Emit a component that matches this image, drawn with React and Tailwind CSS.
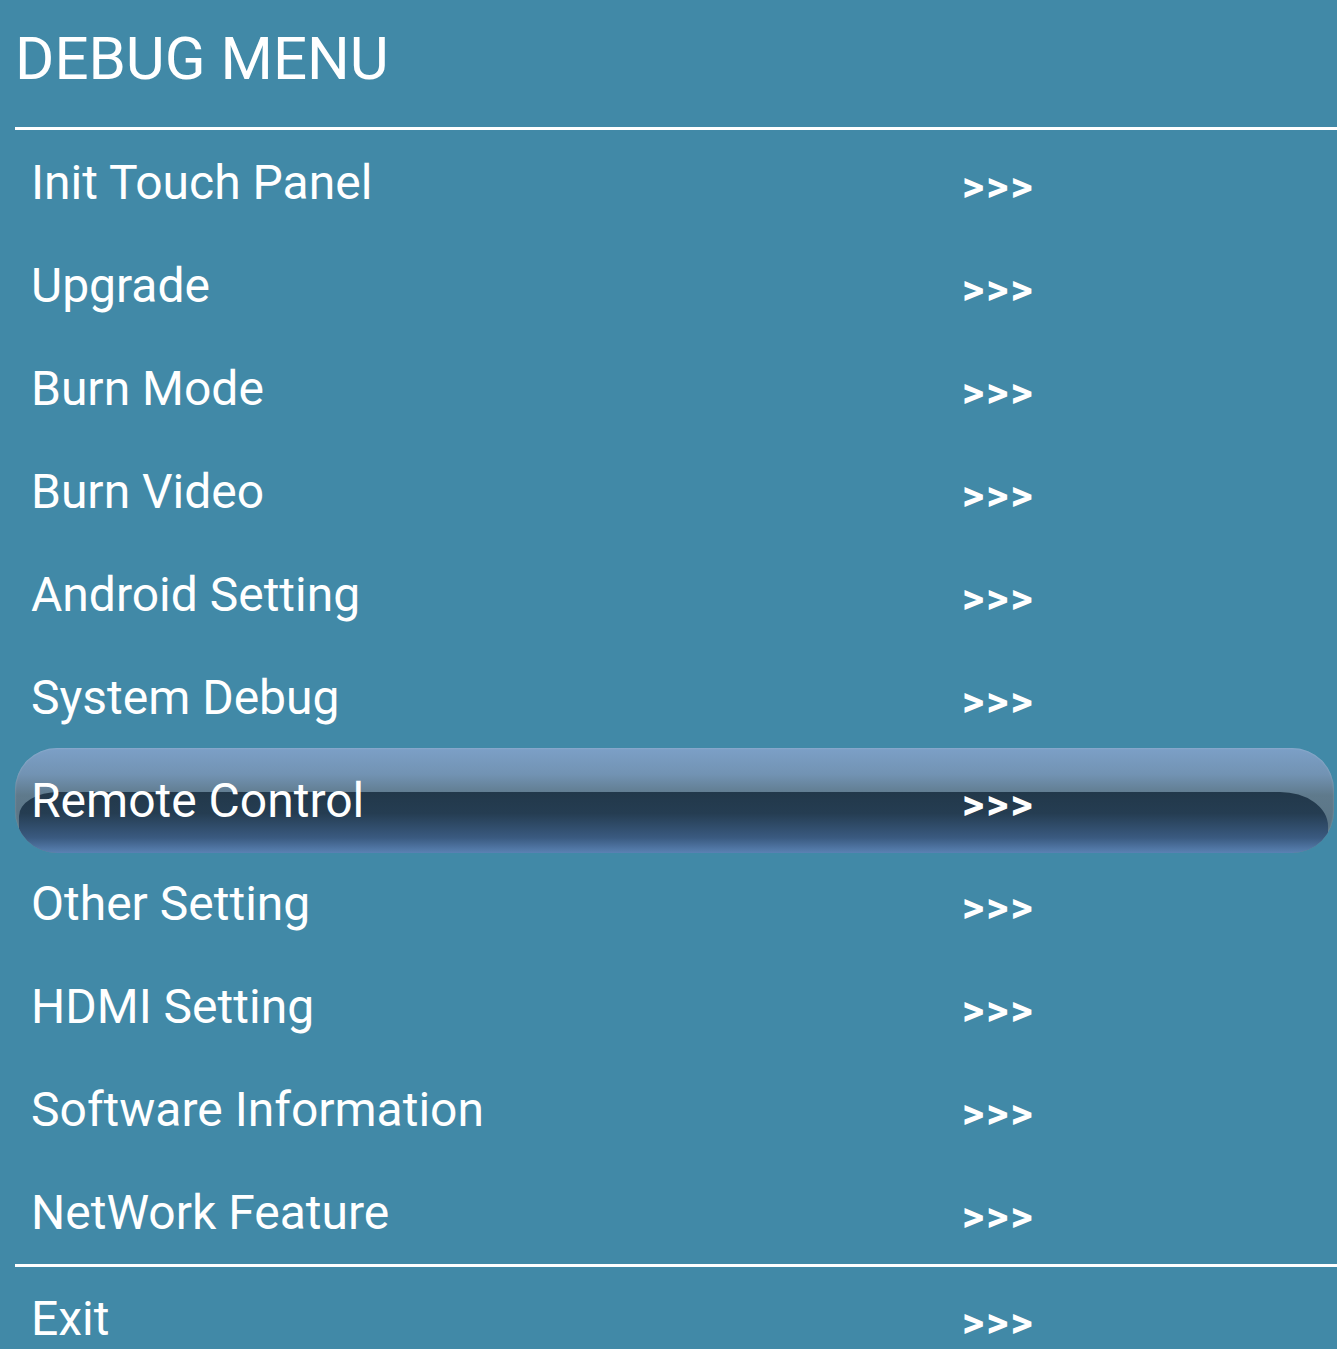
import React from "react";

const items = [
  "Init Touch Panel",
  "Upgrade",
  "Burn Mode",
  "Burn Video",
  "Android Setting",
  "System Debug",
  "Remote Control",
  "Other Setting",
  "HDMI Setting",
  "Software Information",
  "NetWork Feature",
];

const Row = ({ label, active }) => (
  <div className="relative h-[103px] flex items-center">
    {active && (
      <div className="absolute left-[15px] right-[3px] top-[-1px] bottom-[-1px] rounded-[42px] overflow-hidden bg-[linear-gradient(to_bottom,#7ca0c7_0%,#7293b3_25%,#5f7a8c_45%,#56707f_100%)] shadow-[inset_0_0_2px_rgba(255,255,255,0.3)]">
        <div className="absolute left-[4px] right-[6px] top-[42%] bottom-0 rounded-tl-[40px_24px] rounded-tr-[48px_34px] bg-[linear-gradient(to_bottom,#22384a_0%,#253d52_35%,#3a5a80_75%,#5a82b3_100%)]" />
      </div>
    )}
    <span className="relative pl-[31px] w-[962px] text-[48px] leading-none text-white">
      {label}
    </span>
    <span className="relative mt-[8px] text-[43px] font-bold tracking-[2px] leading-none text-white">
      &gt;&gt;&gt;
    </span>
  </div>
);

export default function App() {
  return (
    <div className="w-[1337px] h-[1349px] overflow-hidden bg-[#4189a7] font-['Roboto',sans-serif]">
      <div className="h-[127px] flex items-center pl-[15px] pb-[10px]">
        <h1 className="text-[60px] leading-none text-white">DEBUG MENU</h1>
      </div>
      <div className="ml-[15px] h-[3px] bg-white" />
      <div className="h-[1px]" />
      {items.map((label) => (
        <Row key={label} label={label} active={label === "Remote Control"} />
      ))}
      <div className="ml-[15px] h-[3px] bg-white" />
      <Row label="Exit" />
    </div>
  );
}
